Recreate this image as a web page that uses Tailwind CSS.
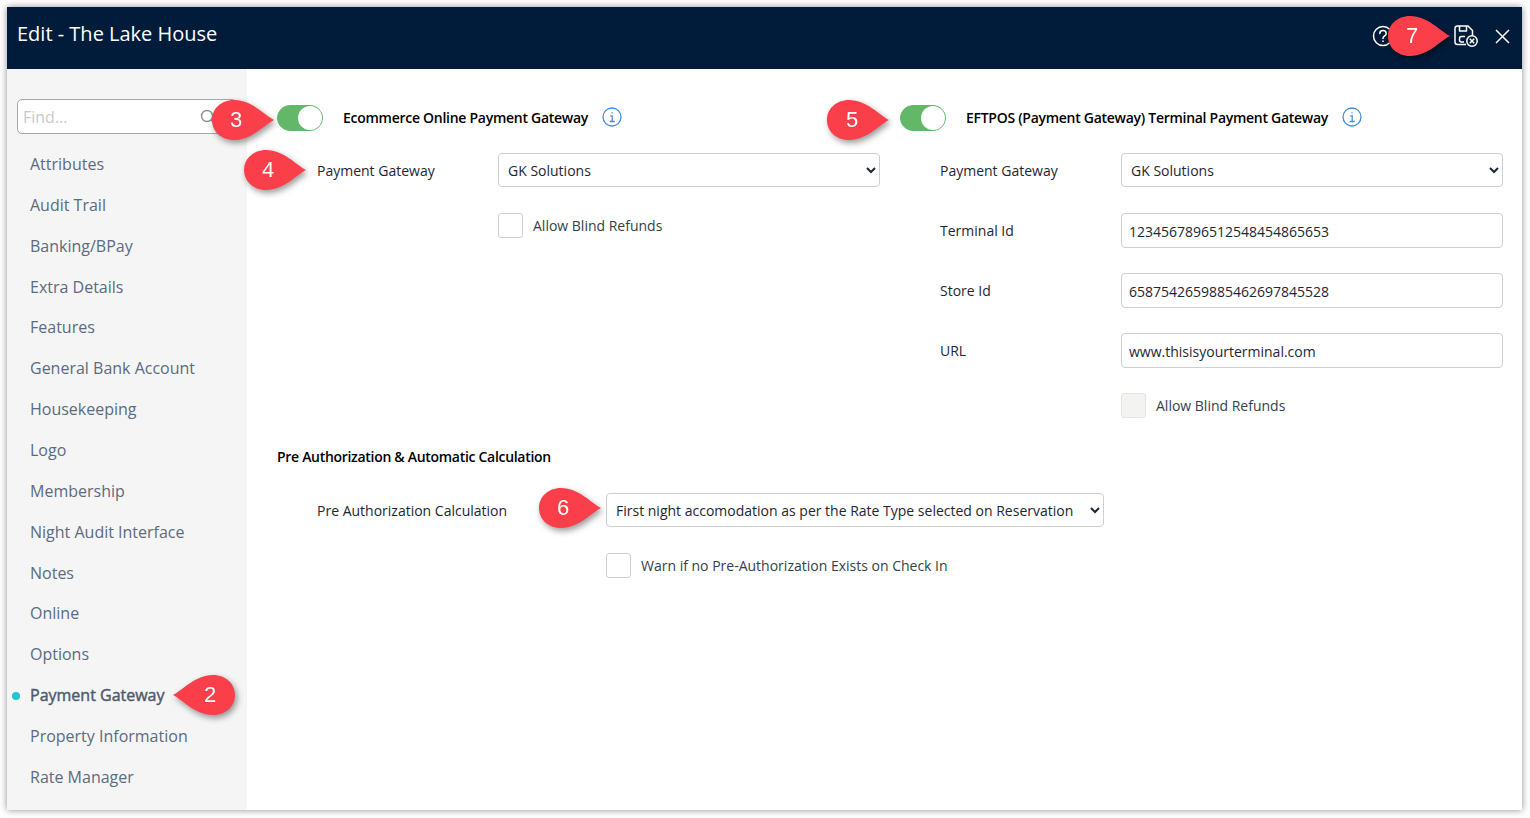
<!DOCTYPE html>
<html lang="en">
<head>
    <meta charset="UTF-8">
    <title>Edit - The Lake House</title>
    <script src="https://cdn.jsdelivr.net/npm/@tailwindcss/browser@4"></script>
</head>
<body class="bg-white h-[818px] overflow-hidden pt-[7px] pl-[7px] pr-[8px] pb-[8px] font-['Open_Sans',sans-serif] relative">
    <div class="h-full flex flex-col bg-white shadow-[0_0_7px_rgba(0,0,0,0.45)]">
        <!-- header -->
        <div class="h-[62px] shrink-0 bg-[#001c3a] flex items-center justify-between pl-[10px] pr-[12px]">
            <h1 class="text-white text-[20px] -mt-[8px]">Edit - The Lake House</h1>
            <div class="flex items-center -mt-[4px]">
                <svg class="w-[22px] h-[22px]" viewBox="0 0 22 22" fill="none" stroke="#fff" stroke-width="1.5">
                    <circle cx="11" cy="11" r="9.5"/>
                    <path d="M7.8 8.6c0-1.9 1.4-3 3.2-3s3.2 1.1 3.2 2.8c0 2.600-3.200 2.500-3.200 5" stroke-linecap="round"/>
                    <path d="M11 15.400v1.600"/>
                </svg>
                <svg class="w-[26px] h-[24px] ml-[59px]" viewBox="0 0 26 24" fill="none" stroke="#fff" stroke-width="1.5" stroke-linejoin="round">
                    <path d="M13 20.500H4.500a2.500 2.500 0 0 1-2.500-2.500V4.500a2.500 2.500 0 0 1 2.500-2.500H15l4.500 4.500v5"/>
                    <path d="M6.500 2v5h7V2"/>
                    <path d="M12 12.500H8.500a2 2 0 0 0-2 2v1.500a2 2 0 0 0 2 2H11"/>
                    <circle cx="19" cy="17" r="5.200"/>
                    <path d="M16.800 14.800l4.400 4.400M21.200 14.800l-4.400 4.400"/>
                </svg>
                <svg class="w-[15px] h-[15px] ml-[16px]" viewBox="0 0 15 15" fill="none" stroke="#fff" stroke-width="1.500">
                    <path d="M1 1l13 13M14 1L1 14"/>
                </svg>
            </div>
        </div>

        <div class="flex flex-1 min-h-0">
            <!-- sidebar -->
            <aside class="w-[240px] shrink-0 bg-[#f5f5f5] overflow-hidden pt-[30px] pl-[10px] pr-[10px]">
                <div class="h-[35px] border border-[#a9a9a9] rounded-[5px] bg-white flex items-center justify-between pl-[5px] pr-[20px]">
                    <span class="text-[16px] text-[#c9c9c9]">Find...</span>
                    <svg class="w-[16px] h-[16px]" viewBox="0 0 16 16" fill="none" stroke="#8a9099" stroke-width="1.400"><circle cx="7" cy="7" r="5.500"/><path d="M11 11l4 4"/></svg>
                </div>
                <ul class="mt-[9.6px] text-[16px] text-[#5b6b80] relative -ml-[10px] pl-[23px]">
                    <li class="h-[40.87px] flex items-center">Attributes</li>
                    <li class="h-[40.87px] flex items-center">Audit Trail</li>
                    <li class="h-[40.87px] flex items-center">Banking/BPay</li>
                    <li class="h-[40.87px] flex items-center">Extra Details</li>
                    <li class="h-[40.87px] flex items-center">Features</li>
                    <li class="h-[40.87px] flex items-center">General Bank Account</li>
                    <li class="h-[40.87px] flex items-center">Housekeeping</li>
                    <li class="h-[40.87px] flex items-center">Logo</li>
                    <li class="h-[40.87px] flex items-center">Membership</li>
                    <li class="h-[40.87px] flex items-center">Night Audit Interface</li>
                    <li class="h-[40.87px] flex items-center">Notes</li>
                    <li class="h-[40.87px] flex items-center">Online</li>
                    <li class="h-[40.87px] flex items-center">Options</li>
                    <li class="h-[40.87px] flex items-center text-[#4d5b6e] [-webkit-text-stroke:0.45px_#4d5b6e] relative">
                        <span class="absolute -left-[18px] top-[17px] w-[8px] h-[8px] rounded-full bg-[#22c7d6]"></span>
                        Payment Gateway
                    </li>
                    <li class="h-[40.87px] flex items-center">Property Information</li>
                    <li class="h-[40.87px] flex items-center">Rate Manager</li>
                </ul>
            </aside>

            <!-- form -->
            <main class="flex-1 pt-[36px] pl-[30px] pr-[19px] text-[14px] text-[#333f4d]">
                <div class="grid grid-cols-2 gap-x-[20px]">
                    <section>
                        <div class="h-[26px] flex items-center">
                            <span class="w-[46px] h-[26px] rounded-full bg-[#62b768] border border-[#62b768] flex justify-end shrink-0"><span class="w-[24px] h-[24px] rounded-full bg-white"></span></span>
                            <span class="ml-[20px] mb-[2px] font-semibold text-black tracking-[-0.27px]">Ecommerce Online Payment Gateway</span>
                            <svg class="w-[20px] h-[20px] ml-[14px] mb-[2px]" viewBox="0 0 20 20" fill="none" stroke="#3f8ee8" stroke-width="1.300"><circle cx="10" cy="10" r="9"/><path d="M10 5.200v1.400M8.200 8.800H10.200V14.500M7.800 14.500h5"/></svg>
                        </div>
                        <div class="mt-[22px] flex items-center pl-[40px]">
                            <label class="w-[181px] text-[#1d2733]">Payment Gateway</label>
                            <select class="flex-1 h-[34px] border border-[#cfcfcf] rounded-[4px] pl-[5px] bg-white text-[#1d2733]"><option>GK Solutions</option></select>
                        </div>
                        <div class="mt-[26px] flex items-center pl-[221px]">
                            <span class="w-[25px] h-[25px] border border-[#d0d0d0] rounded-[3px] bg-white"></span>
                            <span class="ml-[10px]">Allow Blind Refunds</span>
                        </div>
                    </section>
                    <section>
                        <div class="h-[26px] flex items-center">
                            <span class="w-[46px] h-[26px] rounded-full bg-[#62b768] border border-[#62b768] flex justify-end shrink-0"><span class="w-[24px] h-[24px] rounded-full bg-white"></span></span>
                            <span class="ml-[20px] mb-[2px] font-semibold text-black tracking-[-0.28px]">EFTPOS (Payment Gateway) Terminal Payment Gateway</span>
                            <svg class="w-[20px] h-[20px] ml-[14px] mb-[2px]" viewBox="0 0 20 20" fill="none" stroke="#3f8ee8" stroke-width="1.300"><circle cx="10" cy="10" r="9"/><path d="M10 5.200v1.400M8.200 8.800H10.200V14.500M7.800 14.500h5"/></svg>
                        </div>
                        <div class="mt-[22px] flex items-center pl-[40px]">
                            <label class="w-[181px] text-[#1d2733]">Payment Gateway</label>
                            <select class="flex-1 h-[34px] border border-[#cfcfcf] rounded-[4px] pl-[5px] bg-white text-[#1d2733]"><option>GK Solutions</option></select>
                        </div>
                        <div class="mt-[26px] flex items-center pl-[40px]">
                            <label class="w-[181px] text-[#1d2733]">Terminal Id</label>
                            <input class="flex-1 h-[35px] border border-[#cfcfcf] rounded-[4px] pl-[7px] pr-[8px] pt-[2px] text-[#1d2733]" value="1234567896512548454865653">
                        </div>
                        <div class="mt-[25px] flex items-center pl-[40px]">
                            <label class="w-[181px] text-[#1d2733]">Store Id</label>
                            <input class="flex-1 h-[35px] border border-[#cfcfcf] rounded-[4px] pl-[7px] pr-[8px] pt-[2px] text-[#1d2733]" value="6587542659885462697845528">
                        </div>
                        <div class="mt-[25px] flex items-center pl-[40px]">
                            <label class="w-[181px] text-[#1d2733]">URL</label>
                            <input class="flex-1 h-[35px] border border-[#cfcfcf] rounded-[4px] pl-[7px] pr-[8px] pt-[2px] text-[#1d2733]" value="www.thisisyourterminal.com">
                        </div>
                        <div class="mt-[25px] flex items-center pl-[221px]">
                            <span class="w-[25px] h-[25px] border border-[#e4e4e4] rounded-[3px] bg-[#f3f3f1]"></span>
                            <span class="ml-[10px]">Allow Blind Refunds</span>
                        </div>
                    </section>
                </div>

                <h2 class="mt-[29px] font-semibold text-black tracking-[-0.3px] leading-[20px]">Pre Authorization &amp; Automatic Calculation</h2>
                <div class="mt-[26px] flex items-center pl-[40px]">
                    <label class="w-[289px] text-[#1d2733]">Pre Authorization Calculation</label>
                    <select class="w-[498px] h-[34px] border border-[#cfcfcf] rounded-[4px] pl-[5px] bg-white text-[#1d2733]"><option>First night accomodation as per the Rate Type selected on Reservation</option></select>
                </div>
                <div class="mt-[26px] flex items-center pl-[329px]">
                    <span class="w-[25px] h-[25px] border border-[#d0d0d0] rounded-[3px] bg-white"></span>
                    <span class="ml-[10px]">Warn if no Pre-Authorization Exists on Check In</span>
                </div>
            </main>
        </div>
    </div>

    <!-- callouts, sit on top of the screen -->
    <div class="absolute left-[173px] top-[675px] w-[62px] h-[40px] drop-shadow-[2px_3px_3px_rgba(0,0,0,0.4)]">
        <svg class="absolute inset-0 -scale-x-100" width="62" height="40" viewBox="0 0 62 40"><path fill="#fb3f4a" d="M62 20C52 15 40 0 22 0 9 0 0 9 0 20s9 20 22 20c18 0 30-15 40-20z"/></svg>
        <span class="absolute right-[1px] w-[48px] text-center top-[5px] text-white text-[22px] leading-[30px] font-['Liberation_Sans',sans-serif]">2</span>
    </div>
    <div class="absolute left-[212px] top-[100px] w-[62px] h-[40px] drop-shadow-[2px_3px_3px_rgba(0,0,0,0.4)]">
        <svg class="absolute inset-0" width="62" height="40" viewBox="0 0 62 40"><path fill="#fb3f4a" d="M62 20C52 15 40 0 22 0 9 0 0 9 0 20s9 20 22 20c18 0 30-15 40-20z"/></svg>
        <span class="absolute left-0 w-[48px] text-center top-[5px] text-white text-[22px] leading-[30px] font-['Liberation_Sans',sans-serif]">3</span>
    </div>
    <div class="absolute left-[244px] top-[150px] w-[62px] h-[40px] drop-shadow-[2px_3px_3px_rgba(0,0,0,0.4)]">
        <svg class="absolute inset-0" width="62" height="40" viewBox="0 0 62 40"><path fill="#fb3f4a" d="M62 20C52 15 40 0 22 0 9 0 0 9 0 20s9 20 22 20c18 0 30-15 40-20z"/></svg>
        <span class="absolute left-0 w-[48px] text-center top-[5px] text-white text-[22px] leading-[30px] font-['Liberation_Sans',sans-serif]">4</span>
    </div>
    <div class="absolute left-[827px] top-[100px] w-[62px] h-[40px] drop-shadow-[2px_3px_3px_rgba(0,0,0,0.4)]">
        <svg class="absolute inset-0" width="62" height="40" viewBox="0 0 62 40"><path fill="#fb3f4a" d="M62 20C52 15 40 0 22 0 9 0 0 9 0 20s9 20 22 20c18 0 30-15 40-20z"/></svg>
        <span class="absolute left-[1px] w-[48px] text-center top-[5px] text-white text-[22px] leading-[30px] font-['Liberation_Sans',sans-serif]">5</span>
    </div>
    <div class="absolute left-[539px] top-[488px] w-[62px] h-[40px] drop-shadow-[2px_3px_3px_rgba(0,0,0,0.4)]">
        <svg class="absolute inset-0" width="62" height="40" viewBox="0 0 62 40"><path fill="#fb3f4a" d="M62 20C52 15 40 0 22 0 9 0 0 9 0 20s9 20 22 20c18 0 30-15 40-20z"/></svg>
        <span class="absolute left-0 w-[48px] text-center top-[5px] text-white text-[22px] leading-[30px] font-['Liberation_Sans',sans-serif]">6</span>
    </div>
    <div class="absolute left-[1388px] top-[16px] w-[62px] h-[40px] drop-shadow-[2px_3px_3px_rgba(0,0,0,0.4)]">
        <svg class="absolute inset-0" width="62" height="40" viewBox="0 0 62 40"><path fill="#fb3f4a" d="M62 20C52 15 40 0 22 0 9 0 0 9 0 20s9 20 22 20c18 0 30-15 40-20z"/></svg>
        <span class="absolute left-0 w-[48px] text-center top-[5px] text-white text-[22px] leading-[30px] font-['Liberation_Sans',sans-serif]">7</span>
    </div>
</body>
</html>
